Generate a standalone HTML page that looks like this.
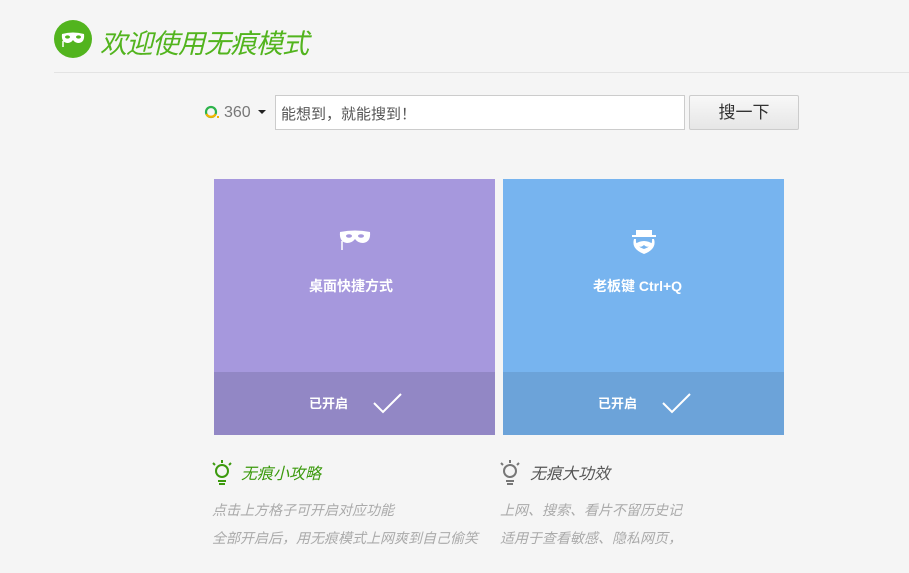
<!DOCTYPE html>
<html><head><meta charset="utf-8"><style>
*{margin:0;padding:0;box-sizing:border-box}
body{width:909px;height:573px;background:#f5f5f5;font-family:"Liberation Sans","Noto Sans CJK SC",sans-serif;position:relative;overflow:hidden}
.a{position:absolute}
.it{font-style:italic}
</style></head><body>
<svg class="a" style="left:54px;top:20px" width="38" height="38" viewBox="0 0 38 38"><circle cx="19" cy="19" r="19" fill="#52b41e"/><path d="M8 14 Q19 11 30 14 Q31 22 25 23 Q21 23 19 20 Q17 23 13 23 Q7 22 8 14Z" fill="#fff"/><ellipse cx="13.5" cy="17" rx="2.5" ry="1.6" fill="#52b41e"/><ellipse cx="24.5" cy="17" rx="2.5" ry="1.6" fill="#52b41e"/><path d="M9 21 V27" stroke="#fff" stroke-width="1.5"/></svg>
<div class="a it" style="left:100px;top:22px;font-size:27px;color:#52b41e;letter-spacing:-1px">欢迎使用无痕模式</div>
<div class="a" style="left:54px;top:72px;width:855px;height:1px;background:#e3e3e3"></div>
<svg class="a" style="left:204px;top:105px" width="16" height="16"><circle cx="7" cy="7" r="5" fill="none" stroke="#2db34b" stroke-width="2.2"/><path d="M2.5 9 A5 5 0 0 0 11.5 9" fill="none" stroke="#f5b400" stroke-width="2.2"/><rect x="13" y="11" width="2" height="2" fill="#f5b400"/></svg>
<div class="a" style="left:224px;top:104px;font-size:16px;color:#777">360</div>
<div class="a" style="left:258px;top:110px;border:4px solid transparent;border-top:4px solid #222;border-bottom:0"></div>
<div class="a" style="left:275px;top:95px;width:410px;height:35px;background:#fff;border:1px solid #ccc"></div>
<div class="a" style="left:281px;top:103px;font-size:15px;color:#555">能想到，就能搜到！</div>
<div class="a" style="left:689px;top:95px;width:110px;height:35px;background:linear-gradient(#f8f8f8,#e6e6e6);border:1px solid #ccc;border-radius:2px;text-align:center;line-height:33px;font-size:17px;color:#333">搜一下</div>
<div class="a" style="left:214px;top:179px;width:281px;height:256px;background:#a698dd"></div>
<div class="a" style="left:214px;top:372px;width:281px;height:63px;background:#9287c5"></div>
<div class="a" style="left:503px;top:179px;width:281px;height:256px;background:#77b4ef"></div>
<div class="a" style="left:503px;top:372px;width:281px;height:63px;background:#6ca3d9"></div>
<svg class="a" style="left:339px;top:229px" width="32" height="24"><path d="M1 3 Q16 0 31 3 Q32 13 24 14 Q19 14 16 10 Q13 14 8 14 Q0 13 1 3Z" fill="#fff"/><ellipse cx="10" cy="7" rx="3" ry="1.7" fill="#a698dd"/><ellipse cx="22" cy="7" rx="3" ry="1.7" fill="#a698dd"/><path d="M3 12 V21" stroke="#fff" stroke-width="1.5"/></svg>
<svg class="a" style="left:628px;top:229px" width="32" height="26"><rect x="8" y="1" width="16" height="6" fill="#fff"/><rect x="4" y="6" width="24" height="2" fill="#fff"/><path d="M6 10 Q3 20 16 25 Q29 20 26 10 L24 10 Q25 17 16 20 Q7 17 8 10Z" fill="#fff"/><path d="M7 15 Q16 9 25 15 Q20 20 16 16 Q12 20 7 15Z" fill="#fff"/></svg>
<div class="a" style="left:309px;top:276px;font-size:14px;font-weight:bold;color:#fff">桌面快捷方式</div>
<div class="a" style="left:593px;top:276px;font-size:14px;font-weight:bold;color:#fff">老板键 Ctrl+Q</div>
<div class="a" style="left:309px;top:393px;font-size:13px;font-weight:bold;color:#fff">已开启</div>
<div class="a" style="left:598px;top:393px;font-size:13px;font-weight:bold;color:#fff">已开启</div>
<svg class="a" style="left:373px;top:392px" width="30" height="22"><path d="M1 11 L10 20 L28 2" fill="none" stroke="#fff" stroke-width="2"/></svg>
<svg class="a" style="left:662px;top:392px" width="30" height="22"><path d="M1 11 L10 20 L28 2" fill="none" stroke="#fff" stroke-width="2"/></svg>
<svg class="a" style="left:210px;top:459px" width="24" height="26"><g fill="none" stroke="#3c9a0e" stroke-width="2"><circle cx="12" cy="12" r="6"/><path d="M12 1V4M3 4L5 6M21 4L19 6M8 22H16M9 25H15"/></g></svg>
<div class="a it" style="left:241px;top:460px;font-size:16px;color:#3c9a0e">无痕小攻略</div>
<svg class="a" style="left:498px;top:459px" width="24" height="26"><g fill="none" stroke="#777" stroke-width="2"><circle cx="12" cy="12" r="6"/><path d="M12 1V4M3 4L5 6M21 4L19 6M8 22H16M9 25H15"/></g></svg>
<div class="a it" style="left:530px;top:460px;font-size:16px;color:#555">无痕大功效</div>
<div class="a it" style="left:212px;top:500px;font-size:14px;color:#aaa">点击上方格子可开启对应功能</div>
<div class="a it" style="left:212px;top:528px;font-size:14px;color:#aaa">全部开启后，用无痕模式上网爽到自己偷笑</div>
<div class="a it" style="left:500px;top:500px;font-size:14px;color:#aaa;width:183px;overflow:hidden;white-space:nowrap">上网、搜索、看片不留历史记录</div>
<div class="a it" style="left:500px;top:528px;font-size:14px;color:#aaa;width:183px;overflow:hidden;white-space:nowrap">适用于查看敏感、隐私网页，</div>
</body></html>
